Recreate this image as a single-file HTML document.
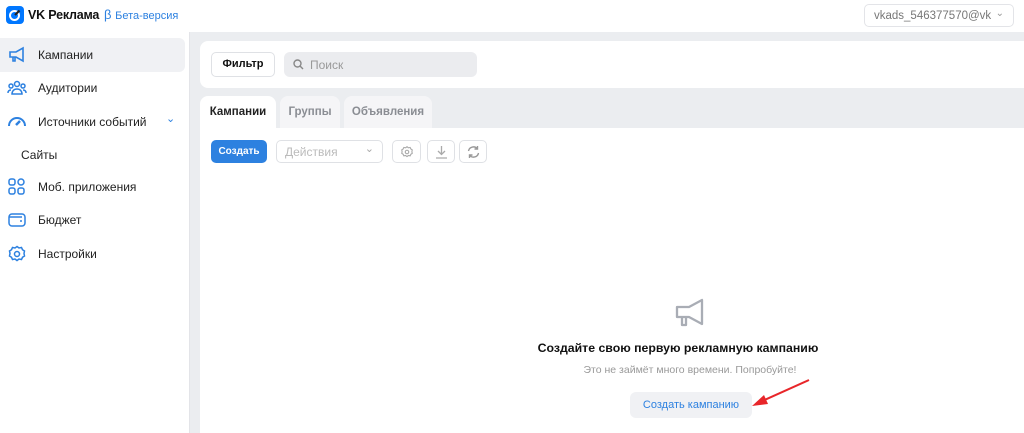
<!DOCTYPE html><html><head><meta charset="utf-8"><style>
*{box-sizing:border-box;margin:0;padding:0}
body{width:1024px;height:433px;overflow:hidden;background:#ebedf0;font-family:"Liberation Sans",sans-serif;position:relative;color:#222}
.a{position:absolute}
.top{left:0;top:0;width:1024px;height:32px;background:#fff}
.side{left:0;top:32px;width:190px;height:401px;background:#fff;border-right:1px solid #e3e4e8}
.item{position:absolute;left:0;width:185px;height:34px;font-size:12px;color:#222;display:flex;align-items:center;padding-left:38px}
.item svg{position:absolute;left:7px;top:8px}
.tab{position:absolute;top:96px;height:32px;border-radius:8px 8px 0 0;background:#f5f5f7;font-size:11.5px;color:#8a8d93;font-weight:bold;display:flex;align-items:center;justify-content:center}
.btn{position:absolute;border:1px solid #dfe1e5;border-radius:5px;background:#fff}
.c{position:absolute;left:200px;width:980px;text-align:center}
</style></head><body>
<div class="a top"></div>
<svg class="a" style="left:6px;top:6px" width="18" height="18" viewBox="0 0 18 18"><rect width="18" height="18" rx="4" fill="#0077ff"/><circle cx="8.5" cy="9.5" r="4.5" fill="none" stroke="#fff" stroke-width="2"/><path d="M9 9l4.5-4.5" stroke="#222" stroke-width="2.2"/></svg>
<div class="a" style="left:28px;top:8px;font-size:12.5px;font-weight:bold;color:#111;letter-spacing:-0.2px">VK Реклама</div>
<div class="a" style="left:104px;top:7px;font-size:13px;color:#2d81e0">β <span style="font-size:11px">Бета-версия</span></div>
<div class="a" style="left:864px;top:4px;width:150px;height:23px;border:1px solid #e3e4e8;border-radius:5px;font-size:11.5px;color:#777;padding:5px 0 0 9px">vkads_546377570@vk<span style="position:absolute;right:9px;top:3px;font-size:10px;color:#999">⌄</span></div>
<div class="a side"></div>
<div class="item" style="top:38px;background:#f0f1f4;border-radius:0 6px 6px 0">
<svg width="20" height="18" viewBox="0 0 20 18" fill="none" stroke="#2d81e0" stroke-width="1.6"><path d="M3 6h6l7-4v13l-7-4H3z"/><path d="M6 11v4h2v-4"/></svg>Кампании</div>
<div class="item" style="top:71px"><svg width="20" height="18" viewBox="0 0 20 18" fill="none" stroke="#2d81e0" stroke-width="1.5"><circle cx="10" cy="5" r="2.5"/><circle cx="4" cy="7" r="2"/><circle cx="16" cy="7" r="2"/><path d="M5 15c0-3 2-5 5-5s5 2 5 5zM1 14c0-2 1-3 3-3M19 14c0-2-1-3-3-3"/></svg>Аудитории</div>
<div class="item" style="top:105px"><svg width="20" height="18" viewBox="0 0 20 18" fill="none" stroke="#2d81e0" stroke-width="2"><path d="M2 13a8 8 0 0 1 16 0"/><path d="M9 12l4-4" stroke-width="2.5"/></svg>Источники событий<span style="position:absolute;left:166px;top:7px;color:#2d81e0;font-size:11px">⌄</span></div>
<div class="item" style="top:138px;padding-left:21px">Сайты</div>
<div class="item" style="top:170px"><svg width="20" height="18" viewBox="0 0 20 18" fill="none" stroke="#2d81e0" stroke-width="1.5"><rect x="2" y="1" width="6" height="6" rx="2"/><circle cx="14" cy="4" r="3"/><rect x="2" y="10" width="6" height="6" rx="2"/><rect x="11" y="10" width="6" height="6" rx="2"/></svg>Моб. приложения</div>
<div class="item" style="top:203px"><svg width="20" height="18" viewBox="0 0 20 18" fill="none" stroke="#2d81e0" stroke-width="1.5"><rect x="2" y="3" width="16" height="12" rx="3"/><path d="M2 6h13"/><path d="M13 10h2"/></svg>Бюджет</div>
<div class="item" style="top:237px"><svg width="20" height="18" viewBox="0 0 20 18" fill="none" stroke="#2d81e0" stroke-width="1.5"><circle cx="10" cy="9" r="2.5"/><path d="M10 1.5l2 1.5 2.5-.5 1 2.2 2 1.3-.5 2.5.5 2.5-2 1.3-1 2.2-2.5-.5-2 1.5-2-1.5-2.5.5-1-2.2-2-1.3.5-2.5-.5-2.5 2-1.3 1-2.2 2.5.5z"/></svg>Настройки</div>
<div class="a" style="left:200px;top:41px;width:824px;height:47px;background:#fff;border-radius:8px 0 0 8px"></div>
<div class="btn" style="left:211px;top:52px;width:64px;height:25px;font-size:11px;font-weight:bold;text-align:center;line-height:23px;color:#111">Фильтр</div>
<div class="a" style="left:284px;top:52px;width:193px;height:25px;background:#ebecef;border-radius:6px;font-size:12px;color:#999;padding:6px 0 0 26px">Поиск<svg style="position:absolute;left:9px;top:7px" width="11" height="11" viewBox="0 0 11 11" fill="none" stroke="#888" stroke-width="1.4"><circle cx="4.5" cy="4.5" r="3.5"/><path d="M7 7l3 3"/></svg></div>
<div class="tab" style="left:200px;width:76px;background:#fff;color:#222">Кампании</div>
<div class="tab" style="left:280px;width:60px">Группы</div>
<div class="tab" style="left:344px;width:88px">Объявления</div>
<div class="a" style="left:200px;top:128px;width:824px;height:305px;background:#fff"></div>
<div class="a" style="left:211px;top:140px;width:56px;height:23px;background:#2d81e0;border-radius:5px;color:#fff;font-size:10px;font-weight:bold;text-align:center;line-height:23px">Создать</div>
<div class="btn" style="left:276px;top:140px;width:107px;height:23px;font-size:12px;color:#bbb;padding:4px 0 0 8px">Действия<span style="position:absolute;right:8px;top:1px;font-size:11px;color:#aaa">⌄</span></div>
<div class="btn" style="left:392px;top:140px;width:29px;height:23px"><svg style="position:absolute;left:7px;top:4px" width="14" height="14" viewBox="0 0 20 18" fill="none" stroke="#aaa" stroke-width="1.6"><circle cx="10" cy="9" r="2.5"/><path d="M10 1.5l2 1.5 2.5-.5 1 2.2 2 1.3-.5 2.5.5 2.5-2 1.3-1 2.2-2.5-.5-2 1.5-2-1.5-2.5.5-1-2.2-2-1.3.5-2.5-.5-2.5 2-1.3 1-2.2 2.5.5z"/></svg></div>
<div class="btn" style="left:427px;top:140px;width:28px;height:23px"><svg style="position:absolute;left:7px;top:4px" width="13" height="14" viewBox="0 0 13 14" fill="none" stroke="#aaa" stroke-width="1.3"><path d="M6.5 1v8M3 6l3.5 3.5L10 6M1 13h11"/></svg></div>
<div class="btn" style="left:459px;top:140px;width:28px;height:23px"><svg style="position:absolute;left:6px;top:4px" width="15" height="14" viewBox="0 0 15 14" fill="none" stroke="#999" stroke-width="1.4"><path d="M2.5 6a5 5 0 0 1 9-2M12.5 8a5 5 0 0 1-9 2M11.5 1v3h-3M3.5 13v-3h3"/></svg></div>
<svg class="a" style="left:674px;top:297px" width="36" height="32" viewBox="0 0 36 32" fill="none" stroke="#a9adb5" stroke-width="2.3" stroke-linejoin="round"><path d="M3 10h12l13-7v24l-13-7H3z"/><path d="M8 21v7h4v-7"/></svg>
<div class="c" style="left:188px;top:341px;font-size:12.3px;font-weight:bold;color:#111">Создайте свою первую рекламную кампанию</div>
<div class="c" style="top:364px;font-size:10.5px;color:#999">Это не займёт много времени. Попробуйте!</div>
<div class="a" style="left:630px;top:392px;width:122px;height:26px;background:#f0f1f4;border-radius:6px;color:#2d81e0;font-size:11px;text-align:center;line-height:26px">Создать кампанию</div>
<svg class="a" style="left:748px;top:378px" width="66" height="34" viewBox="0 0 66 34"><path d="M61 2L12 24" stroke="#e8262a" stroke-width="2"/><path d="M4 28l12-11 4 9z" fill="#e8262a"/></svg>
</body></html>
